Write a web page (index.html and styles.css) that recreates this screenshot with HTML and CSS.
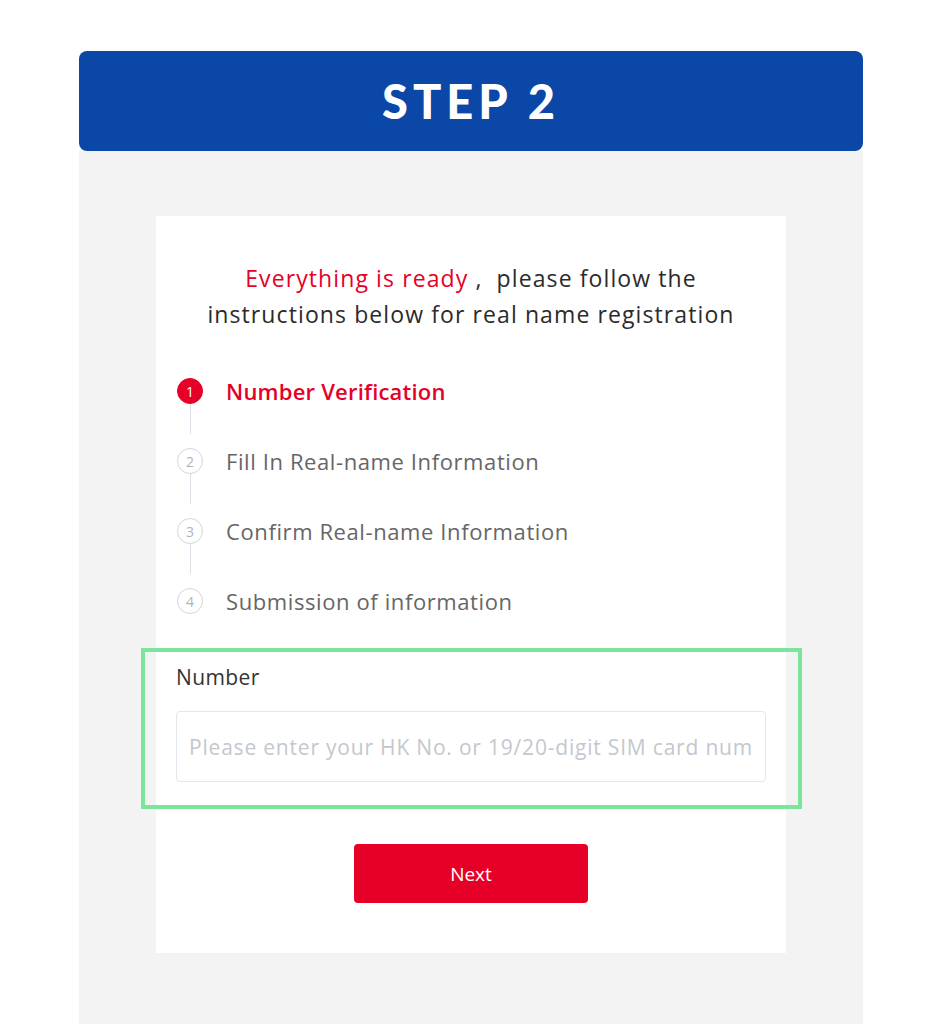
FILE: index.html
```html
<!DOCTYPE html>
<html>
<head>
<meta charset="utf-8">
<link rel="stylesheet" href="styles.css">
</head>
<body>
<div class="page">
  <div class="banner">STEP 2</div>
  <div class="panel">
    <div class="card">
      <p class="intro"><span class="hl">Everything is ready</span>&nbsp;,&nbsp; please follow the<br>instructions below for real name registration</p>
      <ol class="steps">
        <li class="step active"><span class="dot">1</span><span class="label">Number Verification</span></li>
        <li class="step"><span class="dot">2</span><span class="label">Fill In Real-name Information</span></li>
        <li class="step"><span class="dot">3</span><span class="label">Confirm Real-name Information</span></li>
        <li class="step"><span class="dot">4</span><span class="label">Submission of information</span></li>
      </ol>
      <div class="field">
        <div class="highlight"></div>
        <label class="field-label" for="num">Number</label>
        <input id="num" class="input" type="text" placeholder="Please enter your HK No. or 19/20-digit SIM card number">
      </div>
      <div class="actions"><button class="next">Next</button></div>
    </div>
  </div>
</div>
</body>
</html>
```

FILE: styles.css
```css
html, body {
  margin: 0;
  padding: 0;
  background: #ffffff;
  height: 1024px;
  overflow: hidden;
}
body {
  font-family: "Open Sans", "Noto Sans", sans-serif;
}
.page {
  width: 784px;
  margin: 51px 0 0 79px;
}
.banner {
  height: 100px;
  background: #0b47a7;
  border-radius: 8px;
  color: #fff;
  display: flex;
  align-items: center;
  justify-content: center;
  font-family: Lato, "Noto Sans", sans-serif;
  font-weight: 900;
  font-size: 47px;
  letter-spacing: 5px;
}
.panel {
  background: #f3f3f3;
  padding: 65px 77px 100px;
  min-height: 900px;
}
.card {
  background: #fff;
  padding: 44px 20px 50px;
}
.intro {
  margin: 0;
  text-align: center;
  font-size: 23px;
  line-height: 36px;
  font-weight: 500;
  letter-spacing: 1.1px;
  color: #2b2b2b;
  white-space: nowrap;
}
.hl { color: #e60028; }
.steps {
  list-style: none;
  margin: 24px 0 12px;
  padding: 0;
}
.step {
  position: relative;
  display: flex;
  align-items: center;
  height: 70px;
  padding-left: 1px;
}
.step + .step::before {
  content: "";
  position: absolute;
  left: 14px;
  top: -22px;
  height: 30px;
  width: 1px;
  background: #dcdfe6;
}
.dot {
  width: 24px;
  height: 24px;
  border-radius: 50%;
  border: 1.5px solid #d3d6dd;
  color: #b0b3ba;
  font-size: 14px;
  display: flex;
  align-items: center;
  justify-content: center;
  flex: none;
  margin-right: 23px;
}
.label {
  font-size: 22px;
  color: #666;
  letter-spacing: 0.6px;
}
.active .dot {
  background: #e60028;
  border-color: #e60028;
  color: #fff;
}
.active .label {
  color: #e60028;
  font-weight: 600;
  letter-spacing: 0.2px;
}
.field {
  position: relative;
  padding-top: 14px;
}
.highlight {
  position: absolute;
  left: -35px;
  right: -36px;
  top: 0;
  height: 161px;
  border: 4px solid #7ae59b;
  box-sizing: border-box;
  pointer-events: none;
}
.field-label {
  display: block;
  font-size: 21px;
  line-height: 30px;
  letter-spacing: 0.4px;
  color: #333;
}
.input {
  display: block;
  box-sizing: border-box;
  margin-top: 19px;
  width: 590px;
  height: 71px;
  border: 1px solid #e4e6eb;
  border-radius: 4px;
  padding: 0 12px;
  font-family: "Open Sans", "Noto Sans", sans-serif;
  font-size: 21px;
  letter-spacing: 0.8px;
  color: #333;
  outline: none;
}
.input::placeholder { color: #c4c7ce; }
.actions {
  display: flex;
  justify-content: center;
  margin-top: 62px;
}
.next {
  width: 234px;
  height: 59px;
  background: #e60028;
  color: #fff;
  border: none;
  border-radius: 4px;
  font-family: "Open Sans", "Noto Sans", sans-serif;
  font-size: 19px;
}
```
